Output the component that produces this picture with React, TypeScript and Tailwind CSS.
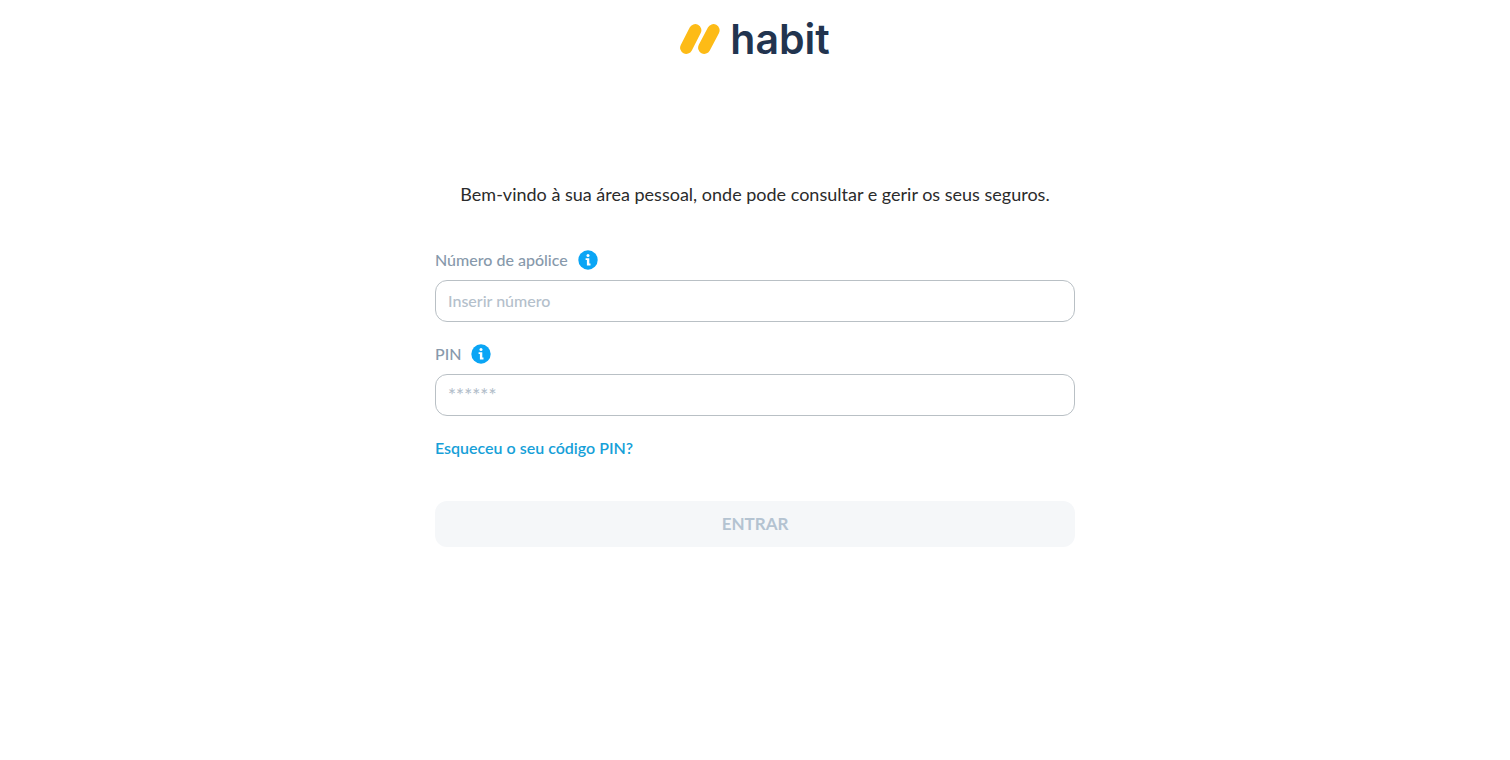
import { useState } from 'react';
import type { FormEvent } from 'react';
import { clsx } from 'clsx';

function Logo() {
  return (
    <div className="flex h-[38px] items-center justify-center gap-2.5">
      <svg className="h-[30px] w-10" viewBox="0 0 40 30" fill="none" aria-hidden="true">
        <path
          d="M6.3 23.7L15.2 6.3M24.3 23.7L33.4 6.3"
          stroke="#fdbb16"
          strokeWidth="12.4"
          strokeLinecap="round"
        />
      </svg>
      <span className="font-['Inter',sans-serif] text-[41px] leading-9 font-semibold text-[#22344f]">
        habit
      </span>
    </div>
  );
}

function InfoIcon() {
  return (
    <svg className="size-5" viewBox="0 0 20 20" aria-hidden="true">
      <circle cx="10" cy="10" r="9.7" fill="#0aa5f5" />
      <circle cx="10" cy="5.4" r="1.5" fill="#fff" />
      <path d="M7.6 8.2h3.7v5.4h1.2v1.8H8.9V9.9H7.6z" fill="#fff" />
    </svg>
  );
}

interface FieldProps {
  id: string;
  label: string;
  type: 'text' | 'password';
  placeholder: string;
  value: string;
  onChange: (value: string) => void;
}

function Field({ id, label, type, placeholder, value, onChange }: FieldProps) {
  return (
    <div>
      <div className="mb-2 flex h-6 items-center gap-2.5">
        <label htmlFor={id} className="font-medium text-[#8799ab]">
          {label}
        </label>
        <button type="button" aria-label={`Ajuda: ${label}`}>
          <InfoIcon />
        </button>
      </div>
      <input
        id={id}
        type={type}
        placeholder={placeholder}
        value={value}
        onChange={(e) => onChange(e.target.value)}
        className={clsx(
          'block h-[42px] w-full rounded-xl border border-[#b9c0c5] bg-white px-3 pb-0.5 font-medium text-[#22344f] outline-none placeholder:text-[#b4c0cb] focus:border-[#0aa5f5]',
          type === 'password' && 'text-[19px]'
        )}
      />
    </div>
  );
}

export default function App() {
  const [policy, setPolicy] = useState('');
  const [pin, setPin] = useState('');
  const canSubmit = policy !== '' && pin !== '';

  const handleSubmit = (e: FormEvent) => {
    e.preventDefault();
  };

  return (
    <div className="min-h-screen bg-white font-['Lato',sans-serif] text-base">
      <header className="pt-5">
        <Logo />
      </header>

      <main className="mx-auto mt-[122px] max-w-[672px] px-4">
        <p className="text-center text-lg text-[#2b2b2b]">
          Bem-vindo à sua área pessoal, onde pode consultar e gerir os seus seguros.
        </p>

        <form onSubmit={handleSubmit} className="mt-10 flex flex-col gap-5">
          <Field
            id="policy"
            label="Número de apólice"
            type="text"
            placeholder="Inserir número"
            value={policy}
            onChange={setPolicy}
          />
          <Field
            id="pin"
            label="PIN"
            type="password"
            placeholder="******"
            value={pin}
            onChange={setPin}
          />
          <a href="#pin" className="self-start font-semibold text-[#16a0d8]">
            Esqueceu o seu código PIN?
          </a>
          <button
            type="submit"
            disabled={!canSubmit}
            className={clsx(
              'mt-[21px] h-[46px] w-full rounded-xl text-[17px] font-bold uppercase',
              canSubmit ? 'bg-[#0aa5f5] text-white' : 'bg-[#f5f7f9] text-[#b4c3d1]'
            )}
          >
            Entrar
          </button>
        </form>
      </main>
    </div>
  );
}
